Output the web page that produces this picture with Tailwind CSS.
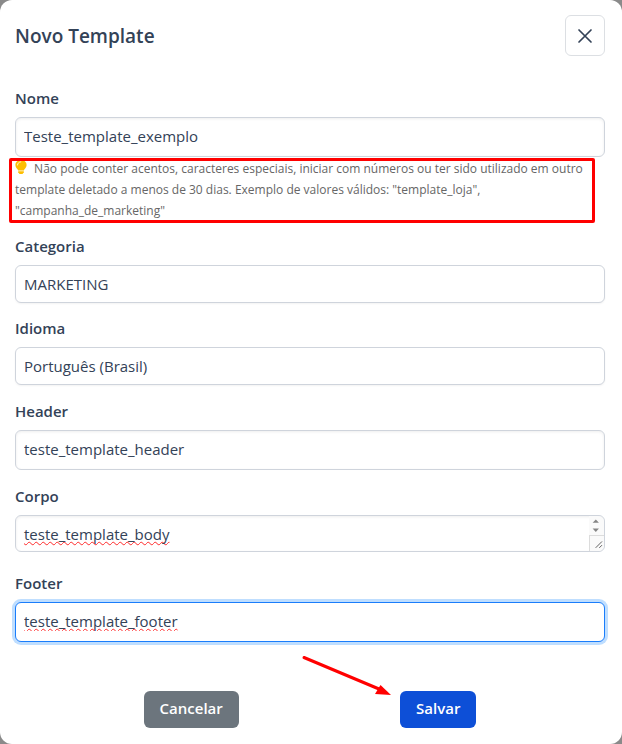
<!DOCTYPE html>
<html lang="pt-BR">
<head>
    <meta charset="UTF-8">
    <meta name="viewport" content="width=device-width, initial-scale=1.0">
    <title>Novo Template</title>
    <script src="https://cdn.jsdelivr.net/npm/@tailwindcss/browser@4"></script>
</head>
<body class="bg-[#8a8a8a] font-['Open_Sans',sans-serif] text-[15px] leading-[22px] text-[#334257]">
    <div role="dialog" aria-labelledby="dialogTitle" class="min-h-screen bg-white rounded-xl pl-[15px] pr-[17px] pt-[15px] pb-4">
        <div class="flex items-center justify-between mb-[31px]">
            <h2 id="dialogTitle" class="text-[19px] leading-7 font-semibold">Novo Template</h2>
            <button type="button" aria-label="Fechar" class="flex items-center justify-center w-10 h-[41px] border border-[#dcdfe3] rounded-md">
                <svg class="w-4 h-4" viewBox="0 0 16 16" fill="none" stroke="currentColor" stroke-width="1.7" stroke-linecap="round"><path d="M2 2l12 12M14 2L2 14"/></svg>
            </button>
        </div>

        <form>
            <div class="mb-3.5">
                <label for="nome" class="block mb-2 font-semibold">Nome</label>
                <input id="nome" type="text" value="Teste_template_exemplo" class="block w-full h-10 px-2 pb-0.5 border border-[#cfd4dc] rounded-md bg-white shadow-[inset_0_1px_3px_rgba(0,0,0,0.07)]">
                <div class="relative">
                    <p class="pt-px text-xs leading-[21px] text-[#666666]">
                        <svg class="inline-block w-3 h-[14px] mr-1 align-[-1px]" viewBox="0 0 12 14" fill="#fdbe02"><path d="M6 0C2.700 0 .4 2.200.4 5c0 1.800 1 2.900 1.900 4 .5.600.7 1 .8 1.500h5.800c.1-.5.3-.9.8-1.500.9-1.100 1.900-2.200 1.900-4C11.600 2.200 9.300 0 6 0z"/><path d="M3.200 11.200h5.600v1L7.500 14h-3L3.200 12.200z"/><path d="M5.800 1.800C4 1.900 2.500 3.200 2.500 5" fill="none" stroke="#fff" stroke-width=".8" stroke-linecap="round"/></svg>
                        Não pode conter acentos, caracteres especiais, iniciar com números ou ter sido utilizado em outro template deletado a menos de 30 dias. Exemplo de valores válidos: "template_loja", "campanha_de_marketing"
                    </p>
                    <!-- highlight around the hint -->
                    <div class="absolute top-px -bottom-0.5 -left-1.5 right-2.5 border-3 border-[#ff0000] rounded-xs pointer-events-none"></div>
                </div>
            </div>

            <div class="mb-3.5">
                <label for="categoria" class="block mb-2 font-semibold">Categoria</label>
                <select id="categoria" class="block w-full h-[38px] px-2 border border-[#cfd4dc] rounded-md bg-white appearance-none shadow-xs">
                    <option>MARKETING</option>
                </select>
            </div>

            <div class="mb-[15px]">
                <label for="idioma" class="block mb-2 font-semibold">Idioma</label>
                <select id="idioma" class="block w-full h-[38px] px-2 border border-[#cfd4dc] rounded-md bg-white appearance-none shadow-xs">
                    <option>Português (Brasil)</option>
                </select>
            </div>

            <div class="mb-[15px]">
                <label for="header" class="block mb-2 font-semibold">Header</label>
                <input id="header" type="text" value="teste_template_header" class="block w-full h-10 px-2 pb-0.5 border border-[#cfd4dc] rounded-md bg-white shadow-[inset_0_1px_3px_rgba(0,0,0,0.07)]">
            </div>

            <div class="mb-5">
                <label for="corpo" class="block mb-2 font-semibold">Corpo</label>
                <div class="relative">
                    <textarea id="corpo" rows="1" spellcheck="false" class="block w-full h-[37px] px-2 py-[7px] border border-[#cfd4dc] rounded-md bg-white resize-none overflow-hidden shadow-[inset_0_1px_3px_rgba(0,0,0,0.07)] underline decoration-wavy decoration-[#ff2a2a] decoration-1 [text-decoration-skip-ink:none]">teste_template_body</textarea>
                    <!-- scroll arrows and resize grip -->
                    <div class="absolute top-px right-px bottom-px w-[15px] flex flex-col rounded-r-md overflow-hidden bg-[#fafafa]">
                        <svg class="w-full h-5" viewBox="0 0 15 20" fill="#858585"><path d="M3.500 7h6.500L6.800 3.500zM3.500 13h6.500L6.800 16.500z"/></svg>
                        <svg class="w-full h-4 border-t border-l border-[#dcdcdc]" viewBox="0 0 15 16" fill="none" stroke="#555" stroke-width="1"><path d="M6 13l7-7M10 13l3-3"/></svg>
                    </div>
                </div>
            </div>

            <div>
                <label for="footer" class="block mb-2 font-semibold">Footer</label>
                <input id="footer" type="text" value="teste_template_footer" spellcheck="false" class="block w-full h-10 px-2 pb-0.5 border border-[#1a7dfb] rounded-md bg-white outline-none ring-3 ring-[#bfdeff] underline decoration-wavy decoration-[#ff2a2a] decoration-1 [text-decoration-skip-ink:none]">
            </div>

            <div class="relative flex justify-around pt-[49px] px-12">
                <button type="button" class="h-[37px] px-4 pb-1 rounded-md bg-[#6c757d] text-white font-semibold">Cancelar</button>
                <button type="submit" class="h-[37px] px-4 pb-1 rounded-md bg-[#0d4fd7] text-white font-semibold">Salvar</button>
                <!-- arrow pointing at the save button -->
                <svg class="absolute top-3 left-1/2 -ml-2 w-[90px] h-[44px] pointer-events-none" viewBox="0 0 90 44" fill="#ff0000"><path d="M2 3.500L77 35" stroke="#ff0000" stroke-width="3" stroke-linecap="round"/><path d="M89 41L73 40l5.500-9z"/></svg>
            </div>
        </form>
    </div>
</body>
</html>
